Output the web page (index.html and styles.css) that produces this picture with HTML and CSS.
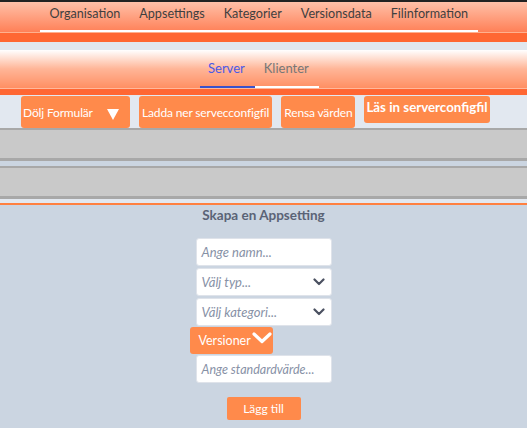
FILE: index.html
```html
<!DOCTYPE html>
<html lang="sv">
<head>
<meta charset="utf-8">
<title>Appsettings</title>
<link rel="stylesheet" href="styles.css">
</head>
<body>
<header class="main-nav">
  <ul class="main-list">
    <li class="main-item">Organisation</li>
    <li class="main-item">Appsettings</li>
    <li class="main-item">Kategorier</li>
    <li class="main-item">Versionsdata</li>
    <li class="main-item">Filinformation</li>
  </ul>
</header>
<div class="band band-one"></div>
<div class="gap-strip"></div>
<nav class="sub-nav">
  <ul class="sub-list">
    <li class="sub-item sub-active">Server</li>
    <li class="sub-item">Klienter</li>
  </ul>
</nav>
<div class="band band-two"></div>
<div class="toolbar">
  <button class="tbtn tbtn-toggle">Dölj Formulär <svg class="tri" width="12" height="11" viewBox="0 0 12 11"><polygon points="0,0 12,0 6,11" fill="#fff"/></svg></button>
  <button class="tbtn">Ladda ner servecconfigfil</button>
  <button class="tbtn">Rensa värden</button>
  <label class="tbtn tbtn-file">Läs in serverconfigfil</label>
</div>
<div class="panel"></div>
<div class="panel"></div>
<div class="divider"></div>
<main class="form-area">
  <h2 class="form-title">Skapa en Appsetting</h2>
  <div class="form-col">
    <div class="field"><span class="ph">Ange namn...</span></div>
    <div class="field field-select"><span class="ph">Välj typ...</span>
      <svg class="chev" width="12" height="8" viewBox="0 0 12 8"><polyline points="1.5,1.5 6,6 10.5,1.5" fill="none" stroke="#4b5161" stroke-width="2.2" stroke-linecap="round" stroke-linejoin="round"/></svg>
    </div>
    <div class="field field-select"><span class="ph">Välj kategori...</span>
      <svg class="chev" width="12" height="8" viewBox="0 0 12 8"><polyline points="1.5,1.5 6,6 10.5,1.5" fill="none" stroke="#4b5161" stroke-width="2.2" stroke-linecap="round" stroke-linejoin="round"/></svg>
    </div>
    <button class="ver-btn">Versioner<svg class="ver-chev" width="20" height="12" viewBox="0 0 20 12"><polyline points="2,2 10,9.5 18,2" fill="none" stroke="#fff" stroke-width="3.2" stroke-linecap="round" stroke-linejoin="round"/></svg></button>
    <div class="field"><span class="ph ph-small">Ange standardvärde...</span></div>
  </div>
  <button class="add-btn">Lägg till</button>
</main>
</body>
</html>
```
FILE: styles.css
```css
* { box-sizing: border-box; }
html, body { margin: 0; padding: 0; }
body {
  font-family: Lato, "Open Sans", sans-serif;
  background: #cbd5e1;
  width: 527px;
  height: 428px;
  overflow: hidden;
}
.main-nav {
  border-top: 2px solid #222;
  height: 33px;
  background: linear-gradient(#ffc0a8, #ff8057);
  border-bottom: 1px solid #ffb08e;
}
.main-list {
  list-style: none;
  margin: 0;
  padding: 0 0 0 40px;
  display: flex;
}
.main-item {
  padding: 0 9.5px;
  height: 30px;
  line-height: 24px;
  font-size: 12.6px;
  color: #3f3f3f;
  border-bottom: 2px solid #fff;
}
.band { background: #ff6733; }
.band-one { height: 9px; }
.gap-strip { height: 8px; background: #e1e7ef; }
.sub-nav {
  height: 39px;
  background: linear-gradient(#fff 0%, #ffb597 50%, #ff8f63 100%);
  border-bottom: 1px solid #ffb89c;
}
.sub-list {
  list-style: none;
  margin: 0;
  padding: 0 0 0 200px;
  display: flex;
}
.sub-item {
  padding: 0 10px 0 9px;
  height: 38px;
  line-height: 37px;
  font-size: 13px;
  color: #777;
  border-bottom: 2px solid #fff;
}
.sub-active { color: #4a5ae6; border-bottom-color: #3a52cc; padding: 0 10px 0 8px; }
.band-two { height: 6px; }
.toolbar {
  background: #e2e8f0;
  height: 33px;
  display: flex;
  align-items: flex-start;
  padding: 1px 0 0 21px;
  gap: 9px;
}
.tbtn {
  font-family: inherit;
  font-size: 12px;
  letter-spacing: -0.15px;
  color: #fff;
  background: #ff8a4b;
  border: none;
  border-radius: 3px;
  height: 32px;
  padding: 0 3px;
  margin: 0;
  display: flex;
  align-items: center;
}
.tbtn-toggle { width: 109px; padding-left: 2px; justify-content: space-between; padding-right: 11px; }
.tri { margin-top: 4px; }
.tbtn-file {
  font-weight: bold;
  font-size: 13.3px;
  letter-spacing: 0;
  height: 27px;
  align-items: flex-start;
  padding: 3px 3px 0 2px;
}
.panel {
  height: 33px;
  background: #c9c9c9;
  border-top: 2px solid #a8a8a8;
  border-bottom: 3px solid #a8a8a8;
}
.panel + .panel { margin-top: 5px; }
.divider {
  height: 6px;
  background: #e2e8f0;
  border-bottom: 2px solid #ff8040;
}
.form-area {
  display: flex;
  flex-direction: column;
  align-items: center;
}
.form-title {
  margin: 2px 0 0 0;
  font-size: 13.5px;
  line-height: 16px;
  color: #5a6376;
  font-weight: bold;
}
.form-col {
  width: 148px;
  margin-top: 15px;
  display: flex;
  flex-direction: column;
  gap: 2px;
}
.field {
  margin-left: 6px;
  width: 136px;
  height: 28px;
  background: #fff;
  border: 1px solid #dfe3ea;
  border-radius: 3px;
  display: flex;
  align-items: center;
  justify-content: space-between;
  padding: 0 6px 0 5px;
}
.ph {
  font-style: italic;
  font-size: 13px;
  color: #8791a6;
}
.ph-small { font-size: 12.5px; }
.chev { margin-top: -1px; }
.ver-btn {
  font-family: inherit;
  width: 83px;
  height: 27px;
  margin: -1px 0 -1px 0;
  background: #ff8a4b;
  color: #fff;
  font-size: 12.5px;
  border: none;
  border-radius: 3px;
  padding: 0 0 0 9px;
  display: flex;
  align-items: center;
}
.ver-chev { align-self: flex-start; margin: 5px 0 0 1px; }
.add-btn {
  font-family: inherit;
  margin-top: 14px;
  width: 74px;
  height: 23px;
  background: #ff8a4b;
  color: #fff;
  font-size: 12px;
  border: none;
  border-radius: 2px;
  padding: 0;
}
```
